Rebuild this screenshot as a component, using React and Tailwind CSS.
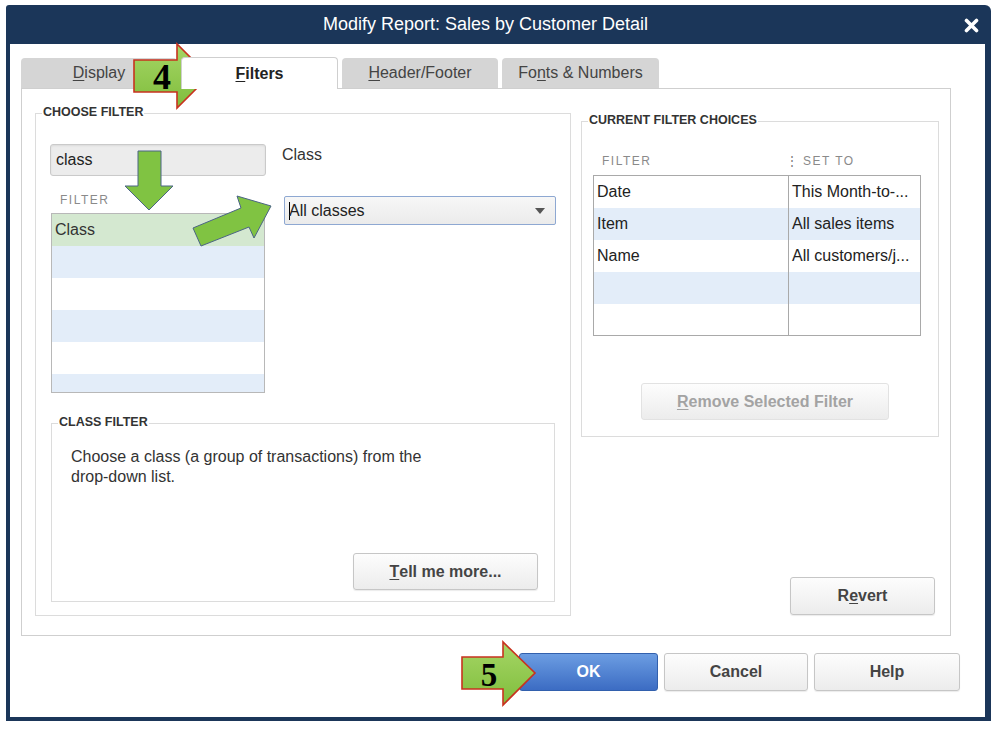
import React from 'react';

const tabs = [
  { label: 'Display', key: 'D', rest: 'isplay' },
  { label: 'Filters', key: 'F', rest: 'ilters', active: true },
  { label: 'Header/Footer', key: 'H', rest: 'eader/Footer' },
];

function GroupBox({ title, className, children }) {
  return (
    <div className={`relative border border-[#dcdcdc] ${className}`}>
      <span className="absolute -top-[9px] left-[6px] bg-white px-[1px] text-[12.5px] font-bold leading-[15px] text-[#333]">
        {title}
      </span>
      {children}
    </div>
  );
}

function GrayButton({ className, children, disabled }) {
  return (
    <button
      className={`flex items-center justify-center rounded-[3px] border bg-gradient-to-b from-[#fdfdfd] to-[#ececec] text-[16px] font-bold ${
        disabled ? 'border-[#e2e2e2] text-[#a3a3a3]' : 'border-[#c6c6c6] text-[#444] shadow-[0_1px_1px_rgba(0,0,0,0.08)]'
      } ${className}`}
    >
      {children}
    </button>
  );
}

function Arrows() {
  return (
    <svg className="pointer-events-none absolute left-0 top-0" width="999" height="729" viewBox="0 0 999 729">
      <defs>
        <linearGradient id="g1" x1="0" y1="0" x2="0" y2="1">
          <stop offset="0" stopColor="#a6d666" />
          <stop offset="1" stopColor="#7fbd3c" />
        </linearGradient>
      </defs>
      {/* step 4 */}
      <polygon
        points="134,60 177,60 177,44 209,76 177,108 177,92 134,92"
        fill="url(#g1)"
        stroke="#c8321f"
        strokeWidth="1.6"
        strokeLinejoin="miter"
      />
      <text x="162" y="89" textAnchor="middle" fontFamily="'Liberation Serif', 'Times New Roman', serif" fontWeight="bold" fontSize="36" fill="#000">
        4
      </text>
      {/* step 5 */}
      <polygon
        points="462,657 503,657 503,642 535,673 503,705 503,689 462,689"
        fill="url(#g1)"
        stroke="#c8321f"
        strokeWidth="1.6"
      />
      <text x="489" y="686" textAnchor="middle" fontFamily="'Liberation Serif', 'Times New Roman', serif" fontWeight="bold" fontSize="33" fill="#000">
        5
      </text>
      {/* down arrow */}
      <polygon
        points="138,151 161,151 161,186 173,186 149,210 125,186 138,186"
        fill="#80c342"
        stroke="#4b6584"
        strokeWidth="1"
      />
      {/* diagonal arrow */}
      <polygon
        points="193,228 241,208 237,196 271,206 254,238 249,227 201,246"
        fill="#80c342"
        stroke="#4b6584"
        strokeWidth="1"
      />
    </svg>
  );
}

export default function App() {
  const listRows = ['green', 'blue', 'white', 'blue', 'white', 'blue'];
  const filterRows = [
    { name: 'Date', value: 'This Month-to-...', bg: 'bg-white' },
    { name: 'Item', value: 'All sales items', bg: 'bg-[#e3edf9]' },
    { name: 'Name', value: 'All customers/j...', bg: 'bg-white' },
    { name: '', value: '', bg: 'bg-[#e3edf9]' },
    { name: '', value: '', bg: 'bg-white' },
  ];

  return (
    <div className="relative h-[729px] w-[999px] overflow-hidden bg-white pl-[6px] pt-[5px] font-['Liberation_Sans',Arial,sans-serif] text-[#333]">
      {/* Dialog frame */}
      <div className="flex h-[716px] w-[985px] flex-col rounded-tr-[6px] rounded-tl-[3px] bg-[#1b3659] pb-[4px] pl-[4px] pr-[6px]">
        {/* Title bar */}
        <div className="relative flex h-[39px] items-center justify-center pr-[24px]">
          <span className="text-[18px] text-white">Modify Report: Sales by Customer Detail</span>
          <svg className="absolute right-[6px] top-[13px]" width="15" height="15" viewBox="0 0 15 15">
            <path d="M2.5 2.5 L12.5 12.5 M12.5 2.5 L2.5 12.5" stroke="#fff" strokeWidth="3.6" strokeLinecap="round" />
          </svg>
        </div>

        {/* Client area */}
        <div className="flex flex-1 flex-col bg-white">
          {/* Tabs */}
          <div className="flex items-end gap-[4px] pl-[11px] pt-[13px]">
            {tabs.map((t) =>
              t.active ? (
                <div
                  key={t.label}
                  className="relative z-10 -mb-px flex h-[32px] w-[157px] items-center justify-center rounded-t-[4px] border border-b-0 border-[#cfcfcf] bg-white text-[16px] font-bold text-[#222]"
                >
                  <span className="underline decoration-1 underline-offset-2">{t.key}</span>
                  {t.rest}
                </div>
              ) : (
                <div
                  key={t.label}
                  className="flex h-[30px] w-[156px] items-center justify-center rounded-t-[4px] bg-[#d5d5d5] text-[16px] text-[#444]"
                >
                  <span className="underline decoration-1 underline-offset-2">{t.key}</span>
                  {t.rest}
                </div>
              )
            )}
            <div className="flex h-[30px] w-[157px] items-center justify-center rounded-t-[4px] bg-[#d5d5d5] text-[16px] text-[#444]">
              Fo<span className="underline decoration-1 underline-offset-2">n</span>ts &amp; Numbers
            </div>
          </div>

          {/* Tab panel */}
          <div className="ml-[11px] flex h-[548px] w-[930px] border border-[#cfcfcf] pl-[13px] pt-[24px]">
            {/* CHOOSE FILTER */}
            <GroupBox title="CHOOSE FILTER" className="h-[503px] w-[536px] pl-[14px] pt-[30px]">
              <div className="flex">
                {/* search + list */}
                <div className="w-[216px]">
                  <div className="flex h-[32px] items-center rounded-[3px] border border-[#cacaca] bg-[#ececec] px-[5px] text-[16px] text-[#222] shadow-[inset_0_1px_2px_rgba(0,0,0,0.08)]">
                    class
                  </div>
                  <div className="flex h-[37px] items-end pb-[6px] pl-[10px] text-[12px] leading-[14px] tracking-[1.5px] text-[#8a8a8a]">
                    FILTER
                  </div>
                  <div className="ml-px h-[180px] w-[214px] overflow-hidden border border-[#b8b8b8]">
                    {listRows.map((r, i) => (
                      <div
                        key={i}
                        className={`flex h-[32px] items-center pl-[3px] text-[16px] text-[#333] ${
                          r === 'green' ? 'bg-[#d4e8d0]' : r === 'blue' ? 'bg-[#e3edf9]' : 'bg-white'
                        }`}
                      >
                        {i === 0 ? 'Class' : ''}
                      </div>
                    ))}
                  </div>
                </div>

                {/* class dropdown */}
                <div className="ml-[16px]">
                  <div className="h-[52px] pt-[1px] text-[16px] leading-[20px] text-[#333]">Class</div>
                  <div className="ml-[2px] flex h-[29px] w-[272px] items-center rounded-[2px] border border-[#8ea8d2] bg-gradient-to-b from-[#f7f7f7] to-[#ebebeb] pl-[4px] pr-[10px] text-[16px] text-[#222]">
                    <span className="mr-[-1px] inline-block h-[18px] w-px bg-black" />
                    <span className="flex-1">All classes</span>
                    <svg width="10" height="6" viewBox="0 0 10 6">
                      <path d="M0 0 L10 0 L5 6 Z" fill="#555" />
                    </svg>
                  </div>
                </div>
              </div>

              {/* CLASS FILTER */}
              <GroupBox title="CLASS FILTER" className="ml-px mt-[30px] flex h-[179px] w-[504px] flex-col pl-[19px] pt-[23px]">
                <p className="text-[16px] leading-[20px] text-[#333]">
                  Choose a class (a group of transactions) from the
                  <br />
                  drop-down list.
                </p>
                <GrayButton className="mb-[11px] mr-[16px] mt-auto h-[37px] w-[185px] self-end">
                  <span className="underline decoration-1 underline-offset-2">T</span>ell me more...
                </GrayButton>
              </GroupBox>
            </GroupBox>

            {/* right column */}
            <div className="ml-[10px] flex h-[503px] w-[358px] flex-col pt-[8px]">
              <GroupBox title="CURRENT FILTER CHOICES" className="h-[316px] w-[358px]">
                <div className="flex h-[53px] items-end pb-[7px] pl-[20px] text-[12px] leading-[14px] tracking-[1.5px] text-[#8a8a8a]">
                  <span className="w-[184px]">FILTER</span>
                  <span className="tracking-normal text-[#777]">⋮</span>
                  <span className="ml-[5px]">SET TO</span>
                </div>
                <div className="ml-[11px] h-[161px] w-[328px] overflow-hidden border border-[#a9a9a9]">
                  {filterRows.map((r, i) => (
                    <div key={i} className={`flex h-[32px] ${r.bg}`}>
                      <div className="flex w-[195px] items-center border-r border-[#a9a9a9] pl-[3px] text-[16px] text-[#222]">
                        {r.name}
                      </div>
                      <div className="flex flex-1 items-center whitespace-nowrap pl-[3px] text-[16px] text-[#222]">
                        {r.value}
                      </div>
                    </div>
                  ))}
                </div>
                <GrayButton disabled className="ml-[59px] mt-[47px] h-[37px] w-[248px]">
                  <span className="underline decoration-1 underline-offset-2">R</span>emove Selected Filter
                </GrayButton>
              </GroupBox>
              <GrayButton className="mb-px mr-[4px] mt-auto h-[38px] w-[145px] self-end">
                R<span className="underline decoration-1 underline-offset-2">e</span>vert
              </GrayButton>
            </div>
          </div>

          {/* Bottom buttons */}
          <div className="mt-[17px] flex justify-end gap-[6px] pr-[25px]">
            <button className="flex h-[38px] w-[139px] items-center justify-center rounded-[3px] border border-[#3260ad] bg-gradient-to-b from-[#6c9de2] to-[#3c6cc3] text-[16px] font-bold text-white">
              OK
            </button>
            <GrayButton className="h-[38px] w-[144px]">Cancel</GrayButton>
            <GrayButton className="h-[38px] w-[146px]">Help</GrayButton>
          </div>
        </div>
      </div>

      <Arrows />
    </div>
  );
}
